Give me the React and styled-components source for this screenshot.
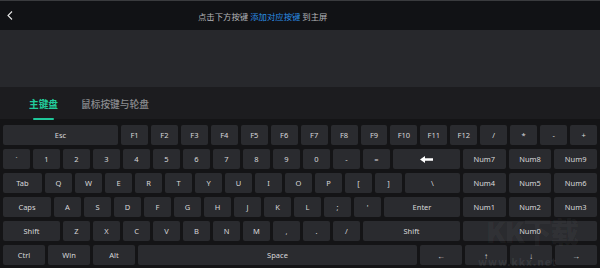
import React from "react"
import styled, { createGlobalStyle } from "styled-components"

const Global = createGlobalStyle`
  html, body { margin: 0; padding: 0; background: #141416; }
  body { width: 600px; height: 268px; overflow: hidden; }
`

const linha1 = ["F1", "F2", "F3", "F4", "F5", "F6", "F7", "F8", "F9", "F10", "F11", "F12", "/", "*", "-", "+"]
const linha2 = ["`", "1", "2", "3", "4", "5", "6", "7", "8", "9", "0", "-", "="]
const linha3 = ["Q", "W", "E", "R", "T", "Y", "U", "I", "O", "P", "[", "]"]
const linha4 = ["A", "S", "D", "F", "G", "H", "J", "K", "L", ";", "'"]
const linha5 = ["Z", "X", "C", "V", "B", "N", "M", ",", ".", "/"]

function Voltar() {
    return (
        <svg width="6" height="9" viewBox="0 0 6 9">
            <polyline points="5,0.5 1,4.5 5,8.5" fill="none" stroke="#e8e8e8" strokeWidth="1.1" />
        </svg>
    )
}

function Apagar() {
    return (
        <svg width="13" height="7" viewBox="0 0 13 7">
            <path d="M0 3.5 L5 0 L5 2.3 L13 2.3 L13 4.7 L5 4.7 L5 7 Z" fill="#ffffff" />
        </svg>
    )
}

export default function App() {
    return (
        <Tela>
            <Global />
            <BarraTopo>
                <Voltar />
                <Titulo>
                    点击下方按键 <span className="destaque">添加对应按键</span> 到主屏
                </Titulo>
            </BarraTopo>
            <Faixa />
            <Abas>
                <Aba ativa>主键盘</Aba>
                <Aba>鼠标按键与轮盘</Aba>
            </Abas>
            <Teclado>
                <Linha>
                    <Tecla $w={115}>Esc</Tecla>
                    {linha1.map((t) => <Tecla key={t}>{t}</Tecla>)}
                </Linha>
                <Linha>
                    <Principal>
                        {linha2.map((t) => <Tecla key={t} $w={27}>{t}</Tecla>)}
                        <Tecla><Apagar /></Tecla>
                    </Principal>
                    <Numerico>
                        <Tecla>Num7</Tecla>
                        <Tecla>Num8</Tecla>
                        <Tecla>Num9</Tecla>
                    </Numerico>
                </Linha>
                <Linha>
                    <Principal>
                        <Tecla $w={39}>Tab</Tecla>
                        {linha3.map((t) => <Tecla key={t} $w={27}>{t}</Tecla>)}
                        <Tecla>\</Tecla>
                    </Principal>
                    <Numerico>
                        <Tecla>Num4</Tecla>
                        <Tecla>Num5</Tecla>
                        <Tecla>Num6</Tecla>
                    </Numerico>
                </Linha>
                <Linha>
                    <Principal>
                        <Tecla $w={48}>Caps</Tecla>
                        {linha4.map((t) => <Tecla key={t} $w={27}>{t}</Tecla>)}
                        <Tecla>Enter</Tecla>
                    </Principal>
                    <Numerico>
                        <Tecla>Num1</Tecla>
                        <Tecla>Num2</Tecla>
                        <Tecla>Num3</Tecla>
                    </Numerico>
                </Linha>
                <Linha>
                    <Principal>
                        <Tecla $w={57}>Shift</Tecla>
                        {linha5.map((t) => <Tecla key={t} $w={27}>{t}</Tecla>)}
                        <Tecla>Shift</Tecla>
                    </Principal>
                    <Numerico>
                        <Tecla>Num0</Tecla>
                    </Numerico>
                </Linha>
                <Linha>
                    <Tecla $w={42}>Ctrl</Tecla>
                    <Tecla $w={42}>Win</Tecla>
                    <Tecla $w={42}>Alt</Tecla>
                    <Tecla>Space</Tecla>
                    <Tecla $w={42} $seta>←</Tecla>
                    <Tecla $w={42} $seta>↑</Tecla>
                    <Tecla $w={42} $seta>↓</Tecla>
                    <Tecla $w={42} $seta>→</Tecla>
                </Linha>
            </Teclado>
            <MarcaDagua>
                <div className="logo">KK下载</div>
                <div className="site">www.kkx.net</div>
            </MarcaDagua>
        </Tela>
    )
}

const Tela = styled.div`
position: relative;
width: 600px;
height: 268px;
display: flex;
flex-direction: column;
background: #141416;
overflow: hidden;
font-family: "Noto Sans", "Noto Sans CJK SC", sans-serif;
`

const BarraTopo = styled.div`
height: 30px;
flex: none;
display: flex;
align-items: center;
padding-left: 7px;
background: #111215;
border-top: 1px solid #3a3b3e;
box-sizing: border-box;
`

const Titulo = styled.div`
margin-left: 185px;
font-family: "Noto Sans CJK SC", sans-serif;
font-size: 8.4px;
color: #b4b5b8;

.destaque{
    color: #2b8fe6;
}
`

const Faixa = styled.div`
height: 57px;
flex: none;
background: #27282c;
`

const Abas = styled.div`
height: 32px;
flex: none;
display: flex;
align-items: center;
gap: 23px;
padding-left: 29px;
background: #1c1c1f;
box-sizing: border-box;
`

const Aba = styled.div`
position: relative;
font-family: "Noto Sans CJK SC", sans-serif;
font-size: 9.7px;
font-weight: ${props => props.ativa ? 700 : 500};
color: ${props => props.ativa ? "#22cc9c" : "#8b8c90"};
margin-top: 1px;

&::after{
    content: "";
    display: ${props => props.ativa ? "block" : "none"};
    position: absolute;
    left: 4px;
    right: 4px;
    bottom: -9px;
    height: 2px;
    border-radius: 1px;
    background: #1fc79a;
}
`

const Teclado = styled.div`
flex: 1;
display: flex;
flex-direction: column;
gap: 4px;
padding: 6px 3px 3px 3px;
background: #141416;
`

const Linha = styled.div`
display: flex;
gap: 3px;
height: 20px;
`

const Principal = styled.div`
flex: 0 0 457px;
display: flex;
gap: 3px;
`

const Numerico = styled.div`
flex: 1;
display: flex;
gap: 3px;
`

const Tecla = styled.div`
flex: ${props => props.$w ? `0 0 ${props.$w}px` : "1 1 0"};
min-width: 0;
height: 20px;
display: flex;
align-items: center;
justify-content: center;
background: #2a2b2f;
border-radius: 2px;
color: #d8d8da;
font-size: ${props => props.$seta ? "8px" : "7.5px"};
font-family: "Noto Sans", sans-serif;
`

const MarcaDagua = styled.div`
position: absolute;
left: 478px;
top: 214px;
width: 120px;
pointer-events: none;
color: rgba(255, 255, 255, 0.05);
font-family: "Noto Sans CJK SC", sans-serif;
font-weight: 900;

.logo{
    margin-left: 8px;
    font-size: 28px;
    line-height: 34px;
    letter-spacing: -1px;
}

.site{
    margin-top: 6px;
    font-size: 10px;
    letter-spacing: 1px;
    color: rgba(255, 255, 255, 0.08);
}
`
